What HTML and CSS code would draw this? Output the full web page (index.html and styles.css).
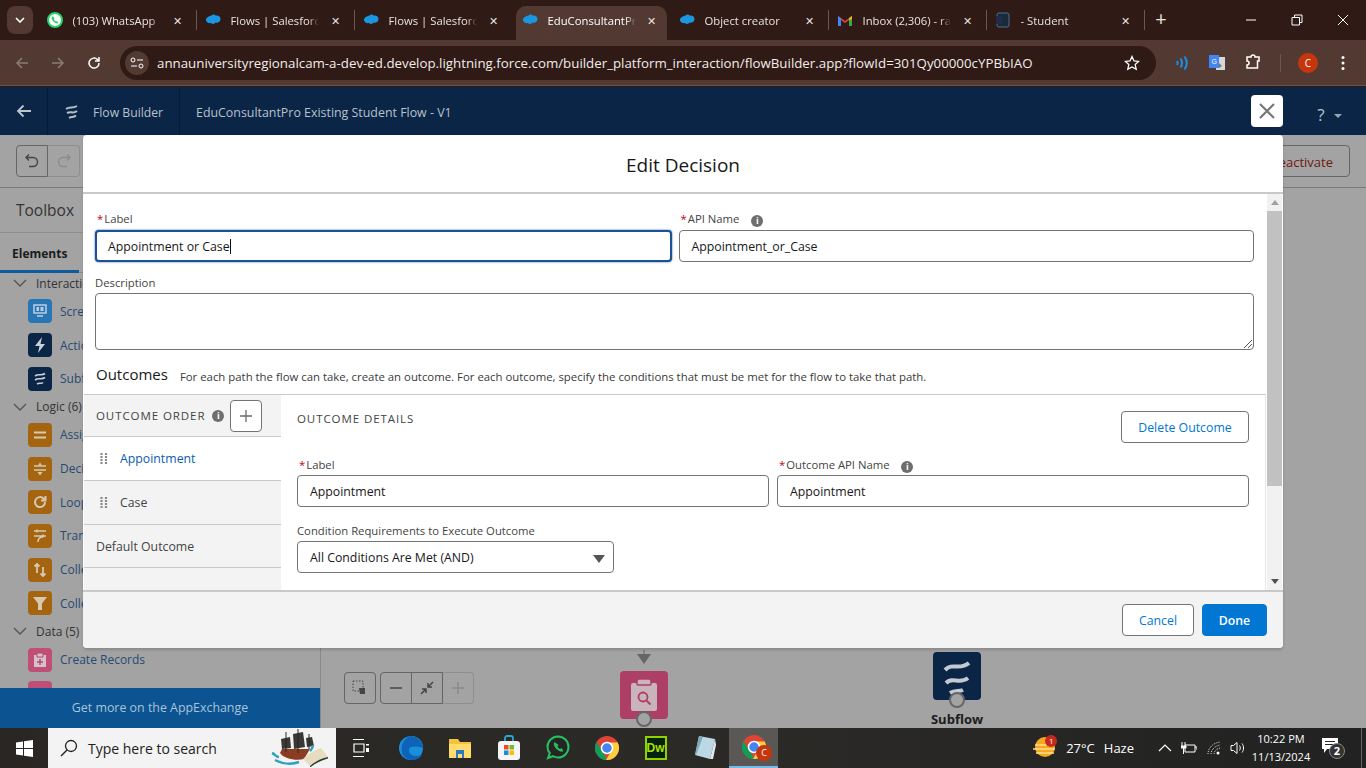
FILE: index.html
```html
<!DOCTYPE html>
<html lang="en">
<head>
    <meta charset="UTF-8">
    <title>Flow Builder</title>
    <link rel="stylesheet" href="styles.css">
</head>
<body>
    <div class="browser">
        <div class="tabstrip">
            <div class="tab-menu"><svg width="10" height="6" viewBox="0 0 10 6"><path d="M1 1l4 4 4-4" fill="none" stroke="#fff" stroke-width="1.6"/></svg></div>
            <div class="tab sep">
                <svg class="fav" viewBox="0 0 16 16"><circle cx="8" cy="8" r="7" fill="#fff" stroke="#25d366" stroke-width="2"/><path d="M5 4.500c-1 1.500 0 3.500 1.500 5s3.500 2.500 5 1.500l-1.500-2-1 .6c-1-.5-1.500-1-2-2l.6-1-1.400-2.100z" fill="#25d366"/></svg>
                <span class="tab-title">(103) WhatsApp</span><span class="tab-x">✕</span>
            </div>
            <div class="tab sep">
                <svg class="fav" viewBox="0 0 16 12"><path d="M6.500 1.500c1.500-1.500 3.500-1 4.300.3 2-.8 4.700.5 4.700 3.200 0 3-3 4.400-5 3.500-1 1.800-3.500 1.800-4.500.5C4 9.500 1.500 8.500 1 6.500.5 4 3.500 2 6.500 1.500z" fill="#1b96e0"/></svg>
                <span class="tab-title">Flows | Salesforce</span><span class="tab-x">✕</span>
            </div>
            <div class="tab">
                <svg class="fav" viewBox="0 0 16 12"><path d="M6.500 1.500c1.500-1.500 3.500-1 4.300.3 2-.8 4.700.5 4.700 3.200 0 3-3 4.400-5 3.500-1 1.800-3.500 1.800-4.500.5C4 9.500 1.500 8.500 1 6.500.5 4 3.500 2 6.500 1.500z" fill="#1b96e0"/></svg>
                <span class="tab-title">Flows | Salesforce</span><span class="tab-x">✕</span>
            </div>
            <div class="tab active">
                <svg class="fav" viewBox="0 0 16 12"><path d="M6.500 1.500c1.500-1.500 3.500-1 4.300.3 2-.8 4.700.5 4.700 3.200 0 3-3 4.400-5 3.500-1 1.800-3.500 1.800-4.500.5C4 9.500 1.500 8.500 1 6.500.5 4 3.500 2 6.500 1.500z" fill="#1b96e0"/></svg>
                <span class="tab-title">EduConsultantPro</span><span class="tab-x">✕</span>
            </div>
            <div class="tab sep">
                <svg class="fav" viewBox="0 0 16 12"><path d="M6.500 1.500c1.500-1.500 3.500-1 4.300.3 2-.8 4.700.5 4.700 3.200 0 3-3 4.400-5 3.500-1 1.800-3.500 1.800-4.500.5C4 9.500 1.500 8.500 1 6.500.5 4 3.500 2 6.500 1.500z" fill="#1b96e0"/></svg>
                <span class="tab-title">Object creator</span><span class="tab-x">✕</span>
            </div>
            <div class="tab sep">
                <svg class="fav" viewBox="0 0 16 12"><path d="M1 12V2l7 5 7-5v10h-3V6L8 9 4 6v6z" fill="#ea4335"/><path d="M1 12V2l3 2.200V12z" fill="#4285f4"/><path d="M15 12V2l-3 2.200V12z" fill="#34a853"/><path d="M12 4.200L15 2v2.500L12 6.700z" fill="#fbbc04"/></svg>
                <span class="tab-title">Inbox (2,306) - ravi</span><span class="tab-x">✕</span>
            </div>
            <div class="tab sep">
                <svg class="fav" viewBox="0 0 16 16"><rect x="2" y="1" width="12" height="14" rx="2" fill="#1b2a3a" stroke="#4b6f8f"/><rect x="1" y="4" width="6" height="8" fill="#222c4a"/></svg>
                <span class="tab-title">- Student</span><span class="tab-x">✕</span>
            </div>
            <div class="tab-new">+</div>
            <div class="win-controls">
                <svg width="12" height="12" viewBox="0 0 12 12"><path d="M1 6h10" stroke="#fff"/></svg>
                <svg width="12" height="12" viewBox="0 0 12 12"><path d="M3.500 3V1h7.500v7.500H9M1 3.500h7.500V11H1z" fill="none" stroke="#fff"/></svg>
                <svg width="12" height="12" viewBox="0 0 12 12"><path d="M1 1l10 10M11 1L1 11" stroke="#fff"/></svg>
            </div>
        </div>
        <div class="urlbar">
            <svg class="nav-icon" viewBox="0 0 16 16"><path d="M14 8H3M8 3L3 8l5 5" fill="none" stroke="#8b7b76" stroke-width="1.500"/></svg>
            <svg class="nav-icon" viewBox="0 0 16 16"><path d="M2 8h11M8 3l5 5-5 5" fill="none" stroke="#8b7b76" stroke-width="1.500"/></svg>
            <svg class="nav-icon" viewBox="0 0 16 16"><path d="M13 8a5 5 0 1 1-1.500-3.500L13 6M13 2v4H9" fill="none" stroke="#fff" stroke-width="1.500"/></svg>
            <div class="omnibox">
                <div class="site-info"><svg width="14" height="12" viewBox="0 0 14 12"><circle cx="3" cy="3" r="2" fill="none" stroke="#fff"/><path d="M7 3h6M1 9h6" stroke="#fff"/><circle cx="11" cy="9" r="2" fill="none" stroke="#fff"/></svg></div>
                <span class="url">annauniversityregionalcam-a-dev-ed.develop.lightning.force.com/builder_platform_interaction/flowBuilder.app?flowId=301Qy00000cYPBbIAO</span>
                <svg class="star" width="16" height="16" viewBox="0 0 16 16"><path d="M8 1.500l2 4.400 4.700.5-3.500 3.200 1 4.700L8 11.900l-4.200 2.400 1-4.700L1.300 6.400 6 5.900z" fill="none" stroke="#fff" stroke-width="1.300"/></svg>
            </div>
            <div class="ext-icons">
                <svg width="16" height="16" viewBox="0 0 16 16"><path d="M3 6c.8 1.200.8 2.800 0 4M6.500 3.500c1.800 2.700 1.800 6.300 0 9M10.500 1.500c2.800 4 2.800 9 0 13" fill="none" stroke="#1a8fe3" stroke-width="2"/></svg>
                <svg width="18" height="18" viewBox="0 0 18 18"><path d="M8 3h9v13H8z" fill="#d8d8d8"/><path d="M1 1h10v13H1z" fill="#4285f4"/><text x="3.500" y="10" font-size="7" fill="#fff" class="ext-g">G</text><path d="M11 9l3 3-3 2z" fill="#777"/></svg>
                <svg width="18" height="18" viewBox="0 0 18 18"><path d="M3 3h4a2 2 0 0 1 4 0h4v4h-1.500v7H3v-3a2 2 0 0 0 0-4z" fill="none" stroke="#fff" stroke-width="1.500"/></svg>
                <span class="ext-sep"></span>
                <span class="avatar">C</span>
                <svg class="dots" width="4" height="16" viewBox="0 0 4 16"><circle cx="2" cy="2.500" r="1.500" fill="#fff"/><circle cx="2" cy="8" r="1.500" fill="#fff"/><circle cx="2" cy="13.500" r="1.500" fill="#fff"/></svg>
            </div>
        </div>
    </div>

    <div class="app">
        <div class="app-header">
            <div class="hd-back"><svg width="16" height="14" viewBox="0 0 16 14"><path d="M15 7H2M7.500 1.500L2 7l5.500 5.500" fill="none" stroke="#bcc4ce" stroke-width="1.800"/></svg></div>
            <div class="hd-app">
                <svg width="18" height="18" viewBox="0 0 18 18"><path d="M3 5c4-3 6 0 11-3M4 9c4-2 6 1 10-2M6 14c3-2 4 0 7-2.500" fill="none" stroke="#b6bec9" stroke-width="2"/></svg>
                <span>Flow Builder</span>
            </div>
            <div class="hd-title">EduConsultantPro Existing Student Flow - V1</div>
            <div class="hd-help">? <i class="caret"></i></div>
        </div>
        <div class="app-toolbar">
            <div class="undo-group">
                <button class="undo"><svg width="16" height="16" viewBox="0 0 16 16"><path d="M5 1.500L2 4.500l3 3M2.500 4.500H9a4.500 4.500 0 0 1 0 9H5" fill="none" stroke="#444" stroke-width="1.400"/></svg></button>
                <button class="redo"><svg width="16" height="16" viewBox="0 0 16 16"><path d="M11 1.500l3 3-3 3M13.500 4.500H7a4.500 4.500 0 0 0 0 9h4" fill="none" stroke="#8c8c8c" stroke-width="1.400"/></svg></button>
            </div>
            <button class="deactivate">Deactivate</button>
        </div>
        <div class="app-body">
            <aside class="toolbox">
                <h2 class="tb-title">Toolbox</h2>
                <div class="tb-tabs"><span class="tb-tab">Elements</span></div>
                <div class="tb-list">
                    <div class="tb-group"><svg width="14" height="8" viewBox="0 0 14 8"><path d="M1 1l6 6 6-6" fill="none" stroke="#555" stroke-width="1.400"/></svg>Interaction (3)</div>
                    <div class="tb-item"><span class="tb-ico ico-blue"><svg width="16" height="16" viewBox="0 0 16 16"><path d="M2 2h12v8H2zM5 13h6" fill="none" stroke="#b9cfe2" stroke-width="1.500"/><path d="M4.500 4h2.500v4H4.500zM8.500 4h3v4h-3z" fill="#b9cfe2"/></svg></span>Screen</div>
                    <div class="tb-item"><span class="tb-ico ico-navy"><svg width="14" height="18" viewBox="0 0 14 18"><path d="M9 1L2 10h4.500L5 17l7-9H7.500z" fill="#c8d0d8"/></svg></span>Action</div>
                    <div class="tb-item"><span class="tb-ico ico-navy"><svg width="16" height="16" viewBox="0 0 16 16"><path d="M3 5c4-3 6 .5 10-2.500M3 9c4-3 6 .5 10-2.500M5 13c3-2 4 .5 6-1.500" fill="none" stroke="#c8d0d8" stroke-width="1.600"/></svg></span>Subflow</div>
                    <div class="tb-group"><svg width="14" height="8" viewBox="0 0 14 8"><path d="M1 1l6 6 6-6" fill="none" stroke="#555" stroke-width="1.400"/></svg>Logic (6)</div>
                    <div class="tb-item"><span class="tb-ico ico-orange"><svg width="16" height="16" viewBox="0 0 16 16"><path d="M2 5.500h12M2 10.500h12" stroke="#d8c8b0" stroke-width="2"/></svg></span>Assignment</div>
                    <div class="tb-item"><span class="tb-ico ico-orange"><svg width="16" height="16" viewBox="0 0 16 16"><path d="M2 5h12M2 9h12" stroke="#d8c8b0" stroke-width="1.500"/><path d="M8 1.500L6 4.500h4zM8 14.500l2.500-3.500h-5z" fill="#d8c8b0"/></svg></span>Decision</div>
                    <div class="tb-item"><span class="tb-ico ico-orange"><svg width="16" height="16" viewBox="0 0 16 16"><path d="M13 8a5 5 0 1 1-1.500-3.500L13 6M13.500 2v4.500H9" fill="none" stroke="#d8c8b0" stroke-width="2"/></svg></span>Loop</div>
                    <div class="tb-item"><span class="tb-ico ico-orange"><svg width="16" height="16" viewBox="0 0 16 16"><path d="M2 3h12M2 8h12M5 1.500v3M11 6.500v3M6 14c0-4 2-5 5-5" fill="none" stroke="#d8c8b0" stroke-width="1.600"/></svg></span>Transform</div>
                    <div class="tb-item"><span class="tb-ico ico-orange"><svg width="16" height="16" viewBox="0 0 16 16"><path d="M5 11V2M2.500 4.500L5 2l2.500 2.500M11 5v9M8.500 11.500L11 14l2.500-2.500" fill="none" stroke="#d8c8b0" stroke-width="1.800"/></svg></span>Collection Sort</div>
                    <div class="tb-item"><span class="tb-ico ico-orange"><svg width="16" height="16" viewBox="0 0 16 16"><path d="M1 2h14L10 8.500V15H6V8.500z" fill="#d8c8b0"/></svg></span>Collection Filter</div>
                    <div class="tb-group"><svg width="14" height="8" viewBox="0 0 14 8"><path d="M1 1l6 6 6-6" fill="none" stroke="#555" stroke-width="1.400"/></svg>Data (5)</div>
                    <div class="tb-item"><span class="tb-ico ico-pink"><svg width="16" height="16" viewBox="0 0 16 16"><path d="M2 3h12v12H2z" fill="#d8c0c8"/><path d="M5 1h6v4H5z" fill="#d8c0c8" stroke="#b04a6e"/><path d="M8 7v6M5 10h6" stroke="#b04a6e" stroke-width="1.500"/></svg></span>Create Records</div>
                    <div class="tb-item"><span class="tb-ico ico-pink"></span>Update Records</div>
                </div>
                <div class="tb-footer">Get more on the AppExchange</div>
            </aside>
            <main class="canvas">
                <div class="zoom-ctrls">
                    <button class="zoom-btn"><svg width="16" height="16" viewBox="0 0 16 16"><path d="M1 1h10v10H1z" fill="none" stroke="#444" stroke-dasharray="1.500 1.500"/><path d="M7 8h6v6H8z" fill="#444"/></svg></button>
                    <div class="zoom-group">
                        <button class="zoom-btn"><svg width="14" height="14" viewBox="0 0 14 14"><path d="M1 7h12" stroke="#555" stroke-width="1.800"/></svg></button>
                        <button class="zoom-btn"><svg width="14" height="14" viewBox="0 0 14 14"><path d="M13 1L8.500 5.500M8 2v4h4M1 13l4.500-4.500M2 8h4v4" fill="none" stroke="#444" stroke-width="1.500"/></svg></button>
                        <button class="zoom-btn off"><svg width="14" height="14" viewBox="0 0 14 14"><path d="M1 7h12M7 1v12" stroke="#8a8a8a" stroke-width="1.500"/></svg></button>
                    </div>
                </div>
                <div class="node node-get">
                    <svg class="node-arrow" width="14" height="14" viewBox="0 0 14 14"><path d="M7 0v6" stroke="#666"/><path d="M0 4h14L7 14z" fill="#666"/></svg>
                    <div class="node-ico ico-rose"><svg width="28" height="34" viewBox="0 0 28 34"><path d="M3 5h22a2 2 0 0 1 2 2v24a2 2 0 0 1-2 2H3a2 2 0 0 1-2-2V7a2 2 0 0 1 2-2z" fill="#c9b4bc"/><path d="M7 6V3a2 2 0 0 1 2-2h10a2 2 0 0 1 2 2v3a1 1 0 0 1-1 1H8a1 1 0 0 1-1-1z" fill="#c9b4bc" stroke="#ad3f66" stroke-width="1.500"/><circle cx="13" cy="19" r="4.500" fill="none" stroke="#ad3f66" stroke-width="1.800"/><path d="M16.500 22.500l4 4" stroke="#ad3f66" stroke-width="2"/></svg></div>
                    <span class="node-dot"></span>
                </div>
                <div class="node node-sub">
                    <div class="node-ico ico-navy"><svg width="30" height="42" viewBox="0 0 30 42"><path d="M3 15C11 7 17 16 27 8M4 28c7-7 13 2 22-5M8 38c5-3 9-1 13-3" fill="none" stroke="#c4cad2" stroke-width="4"/></svg></div>
                    <span class="node-dot"></span>
                    <span class="node-label">Subflow</span>
                </div>
            </main>
        </div>

        <button class="modal-close"><svg width="18" height="18" viewBox="0 0 18 18"><path d="M2 2l14 14M16 2L2 16" stroke="#777" stroke-width="2.200"/></svg></button>
        <section class="modal">
            <header class="modal-head">Edit Decision</header>
            <div class="modal-scroll">
                <div class="modal-content">
                    <div class="field-row top-row">
                        <div class="field">
                            <label class="lbl"><abbr>*</abbr>Label</label>
                            <div class="input focus">Appointment or Case<i class="cursor"></i></div>
                        </div>
                        <div class="field">
                            <label class="lbl"><abbr>*</abbr>API Name <i class="info info-l">i</i></label>
                            <div class="input">Appointment_or_Case</div>
                        </div>
                    </div>
                    <div class="field desc-field">
                        <label class="lbl">Description</label>
                        <div class="textarea"><svg class="grip" width="8" height="8" viewBox="0 0 8 8"><path d="M8 0L0 8M8 4L4 8" stroke="#555"/></svg></div>
                    </div>
                    <div class="outcomes-head">
                        <h3>Outcomes</h3>
                        <p>For each path the flow can take, create an outcome. For each outcome, specify the conditions that must be met for the flow to take that path.</p>
                    </div>
                    <div class="outcomes">
                        <div class="oc-nav">
                            <div class="oc-nav-head">
                                <span class="caps">OUTCOME ORDER</span>
                                <i class="info">i</i>
                                <button class="add-btn"><svg width="14" height="14" viewBox="0 0 14 14"><path d="M1 7h12M7 1v12" stroke="#6b6b6b" stroke-width="1.300"/></svg></button>
                            </div>
                            <div class="oc-row selected"><svg class="drag" width="8" height="14" viewBox="0 0 8 14"><path d="M1.500 1v12M6 1v12" stroke="#8a8a8a" stroke-width="2.200" stroke-dasharray="2 1"/></svg>Appointment</div>
                            <div class="oc-row"><svg class="drag" width="8" height="14" viewBox="0 0 8 14"><path d="M1.500 1v12M6 1v12" stroke="#8a8a8a" stroke-width="2.200" stroke-dasharray="2 1"/></svg>Case</div>
                            <div class="oc-row plain">Default Outcome</div>
                        </div>
                        <div class="oc-detail">
                            <div class="oc-detail-head">
                                <span class="caps">OUTCOME DETAILS</span>
                                <button class="btn btn-neutral btn-delete">Delete Outcome</button>
                            </div>
                            <div class="field-row">
                                <div class="field">
                                    <label class="lbl"><abbr>*</abbr>Label</label>
                                    <div class="input">Appointment</div>
                                </div>
                                <div class="field">
                                    <label class="lbl"><abbr>*</abbr>Outcome API Name <i class="info info-l">i</i></label>
                                    <div class="input">Appointment</div>
                                </div>
                            </div>
                            <div class="field cond-field">
                                <label class="lbl">Condition Requirements to Execute Outcome</label>
                                <div class="input select">All Conditions Are Met (AND)<i class="select-caret"></i></div>
                            </div>
                        </div>
                    </div>
                </div>
                <div class="scrollbar">
                    <i class="sb-up"></i>
                    <div class="sb-track"><div class="sb-thumb"></div></div>
                    <i class="sb-down"></i>
                </div>
            </div>
            <footer class="modal-foot">
                <button class="btn btn-neutral btn-cancel">Cancel</button>
                <button class="btn btn-brand">Done</button>
            </footer>
        </section>
    </div>

    <div class="taskbar">
        <div class="start"><svg width="17" height="17" viewBox="0 0 17 17"><path d="M0 2.500l7-1v6.500H0zM8 1.300L17 0v8H8zM0 9h7v6.500l-7-1zM8 9h9v8l-9-1.300z" fill="#fff"/></svg></div>
        <div class="search">
            <svg width="18" height="18" viewBox="0 0 18 18"><circle cx="11" cy="7" r="5.500" fill="none" stroke="#222" stroke-width="1.300"/><path d="M7 11l-6 6" stroke="#222" stroke-width="1.500"/></svg>
            <span>Type here to search</span>
            <svg class="ship" width="60" height="38" viewBox="0 0 60 38"><path d="M10 24c4 6 16 8 24 6l6-10H12z" fill="#8a3d22"/><path d="M11 10l9-2 1 11-9 1zM23 5l10-2 2 15-11 2zM36 9l6-1 2 9-7 1z" fill="#3a3835"/><path d="M16 3v20M28 0v24M39 5v15" stroke="#2a2623" stroke-width="1"/><path d="M2 24c3 1 4 4 7 4M5 31c8 4 16 5 24 2M40 22c2-2 3-4 3-6" stroke="#2f9fc4" stroke-width="2.500" fill="none"/><path d="M33 30c6-6 12-9 18-11l7 9c-6 1-14 5-18 9z" fill="#e8dcc0"/><path d="M40 37c4-4 12-8 18-9v1.500c-6 1.500-13 5-18 9z" fill="#2d3a2a"/></svg>
        </div>
        <div class="task-icons">
            <div class="task"><svg width="16" height="20" viewBox="0 0 16 20"><path d="M0 1.500h11M0 18.500h11M1 6h10v8H1z" fill="none" stroke="#fff" stroke-width="1.200"/><path d="M13 6h3v1.500h-3zM13 10h3v4h-3z" fill="#fff"/></svg></div>
            <div class="task"><svg width="26" height="26" viewBox="0 0 26 26"><circle cx="13" cy="13" r="12" fill="#1a8fd8"/><path d="M25 13c0-7-5-12-12-12C20 5 25 8 25 13z" fill="#3fcf8e"/><path d="M13 1C8 2 2 8 4 18c1 4 7 8 12 7 5-1 8-4 8-6-5 4-14 2-13-5 1-3 8-3 14-1C25 6 20 1 13 1z" fill="#0c63b8"/></svg></div>
            <div class="task"><svg width="24" height="22" viewBox="0 0 24 22"><path d="M1 2h9l2 3h11v16H1z" fill="#f5c33b"/><path d="M1 7h22v14H1z" fill="#ffdc6c"/><path d="M8 13h8v8h-2v-4h-4v4H8z" fill="#2f78c4"/></svg></div>
            <div class="task"><svg width="24" height="26" viewBox="0 0 24 26"><path d="M8 7V3a2 2 0 0 1 2-2h4a2 2 0 0 1 2 2v4" fill="none" stroke="#2aa5d8" stroke-width="1.800"/><rect x="1" y="6" width="22" height="19" rx="3" fill="#f5f5f5"/><rect x="7" y="10" width="4.500" height="4.500" fill="#e74c2b"/><rect x="12.500" y="10" width="4.500" height="4.500" fill="#7cb82f"/><rect x="7" y="15.500" width="4.500" height="4.500" fill="#1a8fd8"/><rect x="12.500" y="15.500" width="4.500" height="4.500" fill="#fbbc04"/></svg></div>
            <div class="task"><svg width="24" height="26" viewBox="0 0 24 26"><path d="M12 1.500a10.500 10.500 0 0 1 0 21c-2 0-3.500-.5-5-1.300L2 23l1.800-5C2.500 16.500 1.500 14.500 1.500 12A10.500 10.500 0 0 1 12 1.500z" fill="#262523" stroke="#25c05f" stroke-width="2"/><path d="M8.500 7c-1.500 2 0 5 2 7s5 3.500 7 2l-2-3-1.500 1c-1-.5-2-1.500-2.500-2.500l1-1.500z" fill="#25c05f"/></svg></div>
            <div class="task"><svg width="24" height="24" viewBox="0 0 24 24"><circle cx="12" cy="12" r="12" fill="#db4437"/><path d="M12 24A12 12 0 0 1 1.600 6L8 16.500 12.500 24z" fill="#0f9d58"/><path d="M22.700 6.500H12l4.500 8L11 24h1a12 12 0 0 0 10.700-17.500z" fill="#ffcd40"/><circle cx="12" cy="12" r="5.500" fill="#4285f4" stroke="#fff" stroke-width="1.500"/></svg></div>
            <div class="task"><span class="dw">Dw</span></div>
            <div class="task"><svg width="24" height="26" viewBox="0 0 24 26"><path d="M6 1l16 3-5 20-15-4z" fill="#bcd8e4"/><path d="M6 1l4 1-7 18-1 0z" fill="#7fa9bb"/><path d="M17 24l5-20 1 6-3 14z" fill="#e8e8e8"/></svg></div>
            <div class="task current"><svg width="24" height="24" viewBox="0 0 24 24"><circle cx="12" cy="12" r="12" fill="#db4437"/><path d="M12 24A12 12 0 0 1 1.600 6L8 16.500 12.500 24z" fill="#0f9d58"/><path d="M22.700 6.500H12l4.500 8L11 24h1a12 12 0 0 0 10.700-17.500z" fill="#ffcd40"/><circle cx="12" cy="12" r="5.500" fill="#4285f4" stroke="#fff" stroke-width="1.500"/></svg><span class="task-badge">C</span></div>
        </div>
        <div class="tray">
            <div class="weather">
                <svg width="24" height="22" viewBox="0 0 24 22"><circle cx="12" cy="10" r="10" fill="#f7a823"/><path d="M2 8h16M0 12h22M3 16h18" stroke="#ffe08a" stroke-width="1.500"/></svg>
                <span class="w-badge">1</span>
            </div>
            <span class="w-temp">27°C</span>
            <span class="w-text">Haze</span>
            <svg class="tray-chev" width="14" height="8" viewBox="0 0 14 8"><path d="M1 7l6-6 6 6" fill="none" stroke="#fff" stroke-width="1.200"/></svg>
            <svg class="tray-ic bat" width="16" height="12" viewBox="0 0 16 12"><path d="M4 3h10v7H4zM14 5h2v3" fill="none" stroke="#fff"/><path d="M1 0v4M4 0v4M0 4h5v2H0zM2.500 6v6" stroke="#fff" fill="#fff"/></svg>
            <svg class="tray-ic wifi" width="14" height="14" viewBox="0 0 14 14"><path d="M1 13C1 7 6 2 13 1M4 13c0-4 4-8 9-9M7 13c0-2 2-5 6-6" fill="none" stroke="#ddd" stroke-dasharray="1 1"/><circle cx="11" cy="12" r="1.500" fill="#fff"/></svg>
            <svg class="tray-ic vol" width="16" height="14" viewBox="0 0 16 14"><path d="M1 4.500h2.500L7 1.500v11l-3.500-3H1zM9.500 4.500c1 1.500 1 3.500 0 5M12 2.500c2 2.500 2 6.500 0 9" fill="none" stroke="#fff"/></svg>
            <div class="clock"><span>10:22 PM</span><span>11/13/2024</span></div>
            <div class="notif">
                <svg width="16" height="15" viewBox="0 0 16 15"><path d="M0 0h16v11H5l-3 4v-4H0z" fill="#fff"/><path d="M3 3.500h10M3 6.500h10" stroke="#262523"/></svg>
                <span class="notif-num">2</span>
            </div>
            <span class="show-desktop"></span>
        </div>
    </div>
</body>
</html>
```

FILE: styles.css
```css
* {
    box-sizing: border-box;
}
html, body {
    margin: 0;
    height: 100%;
}
body {
    width: 1366px;
    height: 768px;
    overflow: hidden;
    display: flex;
    flex-direction: column;
    font-family: "Open Sans", "Noto Sans", sans-serif;
    font-size: 12.300px;
    color: #222;
    background: #a3a3a3;
}
button {
    font-family: inherit;
    cursor: pointer;
}

/* browser */
.browser {
    height: 87px;
    background: #2f1a15;
    flex: none;
}
.tabstrip {
    height: 40px;
    display: flex;
    align-items: stretch;
    color: #e8e2e0;
    font-size: 11.300px;
}
.tab-menu {
    width: 26px;
    height: 28px;
    margin: 6px 7px 0 7px;
    background: #523a33;
    border-radius: 8px;
    display: flex;
    align-items: center;
    justify-content: center;
}
.tab {
    width: 158px;
    padding: 0 0 0 7px;
    display: flex;
    align-items: center;
    position: relative;
}
.tab.sep::after {
    content: "";
    position: absolute;
    right: 1px;
    top: 10px;
    height: 20px;
    width: 1px;
    background: #6b5751;
}
.tab.active {
    background: #523a33;
    border-radius: 10px 10px 0 0;
    margin: 6px 5px 0 2px;
    width: 151px;
    padding: 0 0 6px 6px;
    color: #fff;
}
.fav {
    width: 16px;
    height: 16px;
    flex: none;
}
.tab-title {
    margin-left: 9.500px;
    width: 88px;
    overflow: hidden;
    white-space: nowrap;
    -webkit-mask-image: linear-gradient(to right, #000 88%, transparent);
    flex: none;
}
.tab .tab-x {
    margin-left: auto;
    margin-right: 16px;
    font-size: 11px;
    color: #e8e2e0;
}
.tab.active .tab-x {
    margin-right: 11px;
}
.tab-new {
    width: 30px;
    font-size: 20px;
    text-align: center;
    line-height: 38px;
}
.win-controls {
    margin-left: auto;
    display: flex;
    align-items: center;
    padding-right: 17px;
    gap: 34px;
}
.urlbar {
    height: 46px;
    background: #523a33;
    border-bottom: 1px solid #6a5148;
    display: flex;
    align-items: center;
    padding: 0 0 0 14px;
}
.nav-icon {
    width: 16px;
    height: 16px;
    margin-right: 20px;
    flex: none;
}
.omnibox {
    width: 1036px;
    height: 34px;
    margin-left: -2px;
    background: #2f1a15;
    border-radius: 17px;
    display: flex;
    align-items: center;
    padding: 0 16px 0 5px;
}
.site-info {
    width: 24px;
    height: 24px;
    border-radius: 50%;
    background: #523a33;
    display: flex;
    align-items: center;
    justify-content: center;
    flex: none;
}
.url {
    margin-left: 8px;
    font-size: 13.300px;
    color: #f2ecea;
    white-space: nowrap;
}
.star {
    margin-left: auto;
}
.ext-icons {
    flex: 1;
    display: flex;
    align-items: center;
    padding-left: 18px;
    gap: 18px;
}
.ext-g {
    font-family: "Liberation Sans", sans-serif;
}
.ext-sep {
    width: 1px;
    height: 18px;
    background: #6b5751;
}
.avatar {
    width: 20px;
    height: 20px;
    border-radius: 50%;
    background: #c5360d;
    color: #fff;
    font-size: 10px;
    display: flex;
    align-items: center;
    justify-content: center;
    margin-left: -1px;
}
.dots {
    margin-left: 5px;
}

/* flow builder page */
.app {
    flex: 1;
    min-height: 0;
    position: relative;
    display: flex;
    flex-direction: column;
}
.app-header {
    height: 48px;
    background: #0a2546;
    color: #b9c1cc;
    display: flex;
    align-items: center;
    flex: none;
}
.hd-back {
    width: 48px;
    height: 100%;
    border-right: 1px solid #071b34;
    display: flex;
    align-items: center;
    justify-content: center;
}
.hd-app {
    width: 132px;
    height: 100%;
    border-right: 1px solid #071b34;
    display: flex;
    align-items: center;
    gap: 12px;
    padding: 3px 0 0 15px;
    font-size: 12.200px;
}
.hd-title {
    padding: 3px 0 0 16px;
    font-size: 12.400px;
}
.hd-help {
    margin-left: auto;
    margin-right: 24px;
    padding-top: 6px;
    font-size: 17px;
}
.caret {
    display: inline-block;
    border: 4px solid transparent;
    border-top-color: #9aa4b0;
    border-bottom: 0;
    vertical-align: middle;
    margin-left: 5px;
}
.app-toolbar {
    height: 53px;
    border-bottom: 1px solid #7c7c7c;
    display: flex;
    justify-content: space-between;
    align-items: center;
    padding: 0 16px;
    flex: none;
}
.undo-group {
    display: flex;
}
.undo, .redo {
    width: 32px;
    height: 32px;
    background: #a3a3a3;
    border: 1px solid #666;
    padding: 0;
    display: flex;
    align-items: center;
    justify-content: center;
}
.undo {
    border-radius: 4px 0 0 4px;
}
.redo {
    border-color: #8e8e8e;
    border-left: 0;
    border-radius: 0 4px 4px 0;
}
.deactivate {
    height: 32px;
    padding: 1px 16px 0;
    background: #a3a3a3;
    border: 1px solid #666;
    border-radius: 4px;
    color: #6e1a12;
    font-size: 13px;
}
.app-body {
    flex: 1;
    min-height: 0;
    display: flex;
}
.toolbox {
    width: 320px;
    display: flex;
    flex-direction: column;
    flex: none;
}
.tb-title {
    height: 45px;
    margin: 0;
    padding: 11px 16px 0;
    font-size: 15.500px;
    font-weight: 400;
    color: #333;
    border-bottom: 1px solid #8e8e8e;
    flex: none;
}
.tb-tabs {
    height: 40px;
    border-bottom: 1px solid #8e8e8e;
    flex: none;
}
.tb-tab {
    display: block;
    width: 79px;
    height: 40px;
    padding: 12px 0 0 12px;
    border-bottom: 3px solid #0f5c9c;
    font-weight: 700;
    font-size: 12px;
    color: #1c1c1c;
}
.tb-list {
    flex: 1;
    min-height: 0;
    overflow: hidden;
    margin-top: -1px;
}
.tb-group {
    height: 22.500px;
    display: flex;
    align-items: center;
    gap: 9px;
    padding-left: 13px;
    font-size: 12px;
    color: #333;
}
.tb-item {
    height: 33.700px;
    display: flex;
    align-items: center;
    gap: 8px;
    padding-left: 28px;
    font-size: 12px;
    color: #264a73;
}
.tb-ico {
    width: 24px;
    height: 24px;
    border-radius: 4px;
    display: flex;
    align-items: center;
    justify-content: center;
    flex: none;
}
.ico-blue {
    background: #2876b4;
}
.ico-navy {
    background: #0a2546;
}
.ico-orange {
    background: #a5640f;
}
.ico-pink {
    background: #c04f78;
}
.ico-rose {
    background: #ad3f66;
}
.tb-footer {
    height: 40px;
    flex: none;
    background: #0b5391;
    color: #a9c4da;
    text-align: center;
    line-height: 40px;
    font-size: 12.400px;
}
.canvas {
    flex: 1;
    position: relative;
    border-left: 1px solid #8a8a8a;
}
.zoom-ctrls {
    position: absolute;
    left: 23px;
    top: 484px;
    display: flex;
    gap: 4px;
}
.zoom-group {
    display: flex;
}
.zoom-btn {
    width: 32px;
    height: 32px;
    padding: 0;
    background: #a3a3a3;
    border: 1px solid #666;
    border-radius: 4px;
    display: flex;
    align-items: center;
    justify-content: center;
}
.zoom-group .zoom-btn {
    border-radius: 0;
    margin-right: -1px;
}
.zoom-group .zoom-btn:first-child {
    border-radius: 4px 0 0 4px;
}
.zoom-group .zoom-btn.off {
    border-color: #8e8e8e;
    border-left-color: #666;
    border-radius: 0 4px 4px 0;
}
.node {
    position: absolute;
    width: 48px;
    display: flex;
    flex-direction: column;
    align-items: center;
}
.node-get {
    left: 299px;
    top: 462px;
}
.node-sub {
    left: 612px;
    top: 464px;
}
.node-arrow {
    margin-bottom: 7px;
}
.node-ico {
    width: 48px;
    height: 48px;
    border-radius: 4px;
    display: flex;
    align-items: center;
    justify-content: center;
    flex: none;
}
.node-dot {
    width: 16px;
    height: 16px;
    margin-top: -8px;
    border: 2px solid #666;
    border-radius: 50%;
    background: #a3a3a3;
    flex: none;
}
.node-label {
    font-weight: 700;
    font-size: 13px;
    color: #1c1c1c;
    margin-top: 2px;
    white-space: nowrap;
}

/* modal */
.modal-close {
    position: absolute;
    left: 1251px;
    top: 8px;
    width: 32px;
    height: 32px;
    background: #fff;
    border: 0;
    border-radius: 4px;
    padding: 0;
    display: flex;
    align-items: center;
    justify-content: center;
}
.modal {
    position: absolute;
    left: 83px;
    top: 48px;
    width: 1200px;
    height: 513px;
    background: #fff;
    border-radius: 4px;
    box-shadow: 0 2px 3px rgba(0, 0, 0, 0.16);
    display: flex;
    flex-direction: column;
    overflow: hidden;
}
.modal-head {
    height: 59px;
    flex: none;
    border-bottom: 2px solid #c9c9c9;
    text-align: center;
    font-size: 19px;
    line-height: 60px;
    color: #181818;
}
.modal-scroll {
    flex: 1;
    min-height: 0;
    display: flex;
}
.modal-content {
    flex: 1;
    min-width: 0;
    overflow: hidden;
}
.field-row {
    display: flex;
    gap: 8px;
}
.field {
    flex: 1;
    min-width: 0;
}
.top-row {
    padding: 18px 13px 0 12px;
}
.lbl {
    display: block;
    height: 15px;
    margin-bottom: 3px;
    line-height: 13px;
    font-size: 11.300px;
    color: #444;
}
.lbl abbr {
    color: #ba0517;
    margin: 0 1px 0 2px;
}
.input {
    height: 32px;
    border: 1px solid #747474;
    border-radius: 4px;
    padding: 1px 12px 0;
    line-height: 30px;
    font-size: 12.300px;
    color: #181818;
    background: #fff;
}
.input.focus {
    border: 2px solid #1b5297;
    box-shadow: 0 0 2px #1b5297;
    margin-right: -1px;
    padding: 1px 11px 0;
    line-height: 28px;
}
.cursor {
    display: inline-block;
    width: 1px;
    height: 15px;
    background: #111;
    vertical-align: -3px;
}
.desc-field {
    padding: 13px 13px 0 12px;
}
.desc-field .lbl {
    line-height: 15px;
}
.textarea {
    height: 57px;
    border: 1px solid #747474;
    border-radius: 4px;
    position: relative;
}
.grip {
    position: absolute;
    right: 1px;
    bottom: 1px;
}
.outcomes-head {
    display: flex;
    align-items: center;
    height: 44px;
    padding: 4px 12px 0 13px;
}
.outcomes-head h3 {
    margin: 0;
    font-size: 15px;
    font-weight: 400;
    color: #181818;
}
.outcomes-head p {
    margin: 5px 0 0 12px;
    font-size: 11.380px;
    color: #3a3a3a;
    white-space: nowrap;
}
.outcomes {
    display: flex;
    margin: 0 1px 0 1px;
    border-top: 1px solid #c9c9c9;
    border-right: 1px solid #e5e5e5;
    height: 196px;
}
.oc-nav {
    width: 197px;
    background: #f3f3f3;
    flex: none;
}
.oc-nav-head {
    height: 42px;
    padding-left: 12px;
    display: flex;
    align-items: center;
    border-bottom: 1px solid #c9c9c9;
}
.caps {
    font-size: 11.500px;
    letter-spacing: 0.920px;
    color: #444;
}
.info {
    display: inline-flex;
    width: 12px;
    height: 12px;
    border-radius: 50%;
    background: #6e6e6e;
    color: #fff;
    font-size: 9px;
    font-weight: 700;
    font-style: normal;
    align-items: center;
    justify-content: center;
    line-height: 1;
}
.oc-nav-head .info {
    margin-left: 7px;
}
.info-l {
    margin-left: 9px;
    vertical-align: -1px;
}
.add-btn {
    width: 32px;
    height: 32px;
    margin-left: 6px;
    padding: 0;
    background: #fff;
    border: 1px solid #747474;
    border-radius: 4px;
    display: flex;
    align-items: center;
    justify-content: center;
}
.oc-row {
    height: 44px;
    border-bottom: 1px solid #c9c9c9;
    display: flex;
    align-items: center;
    gap: 12px;
    padding: 0 0 0 16px;
    color: #444;
}
.oc-row.selected {
    background: #fff;
    color: #0b5cab;
}
.oc-row.plain {
    padding-left: 12px;
    height: 43px;
}
.oc-detail {
    flex: 1;
    min-width: 0;
    padding: 0 16px;
}
.oc-detail-head {
    height: 63px;
    display: flex;
    justify-content: space-between;
    align-items: flex-start;
    padding-top: 16px;
}
.oc-detail .lbl {
    margin-bottom: 2px;
}
.cond-field {
    padding-top: 17px;
    width: 317px;
}
.btn {
    height: 32px;
    padding: 0 15px;
    border-radius: 4px;
    font-size: 12.300px;
}
.btn-neutral {
    background: #fff;
    border: 1px solid #747474;
    color: #0176d3;
}
.btn-brand {
    background: #0176d3;
    border: 1px solid #0176d3;
    color: #fff;
    font-weight: 600;
}
.btn-delete {
    width: 128px;
    padding: 0;
}
.select {
    position: relative;
}
.select-caret {
    position: absolute;
    right: 8px;
    top: 13px;
    border: 6px solid transparent;
    border-top: 8px solid #555;
    border-bottom: 0;
}
.scrollbar {
    width: 15px;
    margin-right: 1px;
    background: #f1f1f1;
    display: flex;
    flex-direction: column;
    flex: none;
}
.sb-up, .sb-down {
    height: 17px;
    flex: none;
    display: flex;
    align-items: center;
    justify-content: center;
}
.sb-up::before {
    content: "";
    border: 4px solid transparent;
    border-bottom: 5px solid #a0a0a0;
    border-top: 0;
}
.sb-down::before {
    content: "";
    border: 4px solid transparent;
    border-top: 5px solid #505050;
    border-bottom: 0;
}
.sb-track {
    flex: 1;
}
.sb-thumb {
    height: 275px;
    background: #c1c1c1;
}
.modal-foot {
    height: 58px;
    flex: none;
    background: #f3f3f3;
    border-top: 2px solid #c9c9c9;
    display: flex;
    justify-content: flex-end;
    align-items: center;
    gap: 8px;
    padding: 0 16px 0 0;
}
.btn-cancel {
    width: 72px;
    padding: 0;
}
.btn-brand {
    width: 65px;
    padding: 0;
}

/* windows taskbar */
.taskbar {
    height: 40px;
    flex: none;
    display: flex;
    align-items: center;
    background: linear-gradient(to right, #2a2624, #2b2a27 50%, #222);
    color: #fff;
}
.start {
    width: 48px;
    height: 40px;
    display: flex;
    align-items: center;
    justify-content: center;
}
.search {
    width: 288px;
    height: 40px;
    background: #f3f3f3;
    display: flex;
    align-items: center;
    padding-left: 12px;
    color: #222;
    font-size: 14px;
}
.search span {
    margin-left: 10px;
}
.ship {
    margin-left: auto;
    margin-right: 6px;
}
.task-icons {
    display: flex;
}
.task {
    width: 49px;
    height: 40px;
    display: flex;
    align-items: center;
    justify-content: center;
    position: relative;
}
.task:first-child {
    width: 50px;
}
.task.current {
    background: #5a5855;
    border-bottom: 2px solid #76b9ed;
}
.task-badge {
    position: absolute;
    left: 27px;
    top: 17px;
    width: 16px;
    height: 16px;
    border-radius: 50%;
    background: #c5360d;
    color: #fff;
    font-size: 9px;
    text-align: center;
    line-height: 16px;
}
.dw {
    width: 22px;
    height: 24px;
    background: #07210f;
    border: 2px solid #8fd400;
    color: #a8e000;
    font-weight: 700;
    font-size: 12px;
    text-align: center;
    line-height: 20px;
    font-family: "Liberation Sans", sans-serif;
}
.tray {
    margin-left: auto;
    display: flex;
    align-items: center;
    height: 40px;
    font-size: 13px;
}
.weather {
    position: relative;
    width: 24px;
    height: 22px;
    display: flex;
}
.w-badge {
    position: absolute;
    left: 12px;
    top: -2px;
    width: 12px;
    height: 12px;
    border-radius: 50%;
    background: #c42b1c;
    font-size: 8px;
    text-align: center;
    line-height: 12px;
}
.w-temp {
    margin-left: 9px;
}
.w-text {
    margin-left: 9px;
}
.tray-chev {
    margin-left: 24px;
}
.tray-ic {
    margin-left: 10px;
}
.bat, .vol {
    margin-left: 9px;
}
.clock {
    width: 68px;
    margin-left: 1px;
    display: flex;
    flex-direction: column;
    align-items: center;
    font-size: 11px;
    line-height: 18px;
}
.notif {
    position: relative;
    margin: 0 15px 0 7px;
    width: 24px;
    height: 24px;
    padding-top: 2px;
}
.notif-num {
    position: absolute;
    left: 7px;
    top: 7px;
    width: 16px;
    height: 16px;
    border-radius: 50%;
    border: 1px solid #888;
    background: #333;
    font-size: 11px;
    font-weight: 700;
    text-align: center;
    line-height: 14px;
}
.show-desktop {
    width: 1px;
    height: 40px;
    margin-right: 4px;
    background: #666;
}
```
